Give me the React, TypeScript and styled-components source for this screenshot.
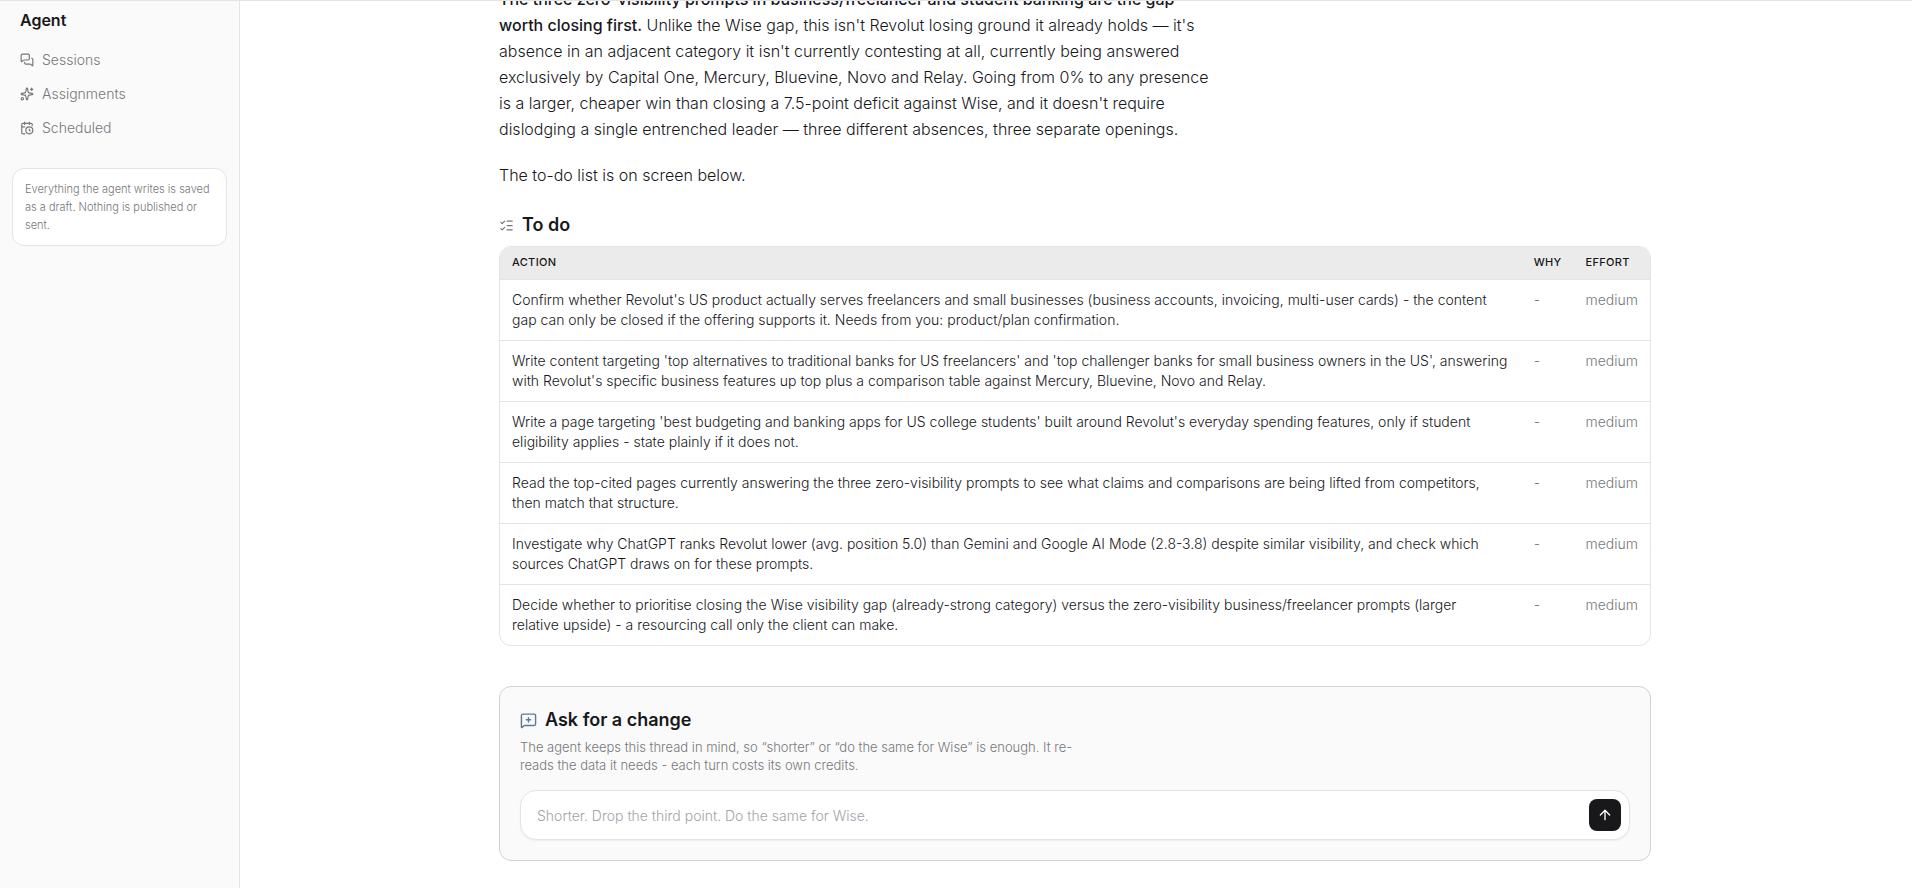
import React from "react";
import styled, { createGlobalStyle } from "styled-components";
import {
  ArrowUp,
  CalendarClock,
  ListChecks,
  MessageSquarePlus,
  MessagesSquare,
  Sparkles,
} from "lucide-react";

const GlobalStyle = createGlobalStyle`
  * { box-sizing: border-box; }
  body {
    margin: 0;
    background: #ffffff;
    color: #18181b;
    font-family: Inter, "Liberation Sans", sans-serif;
    font-weight: 300;
  }
`;

const Shell = styled.div`
  display: flex;
  height: 100vh;
  border-top: 1px solid #e4e4e5;
`;

const Sidebar = styled.aside`
  flex: none;
  width: 240px;
  padding: 7px 12px;
  background: #fafafa;
  border-right: 1px solid #e4e4e5;
`;

const SidebarTitle = styled.h1`
  margin: 0 0 12px;
  padding: 0 8px;
  font-size: 16px;
  line-height: 24px;
  font-weight: 600;
`;

const Nav = styled.nav`
  display: flex;
  flex-direction: column;
  gap: 2px;
`;

const NavLink = styled.a`
  display: flex;
  align-items: center;
  gap: 8px;
  height: 32px;
  padding: 0 8px;
  color: #77777b;
  font-size: 14px;
  line-height: 20px;
  text-decoration: none;
`;

const Note = styled.p`
  margin: 24px 0 0;
  padding: 11px 12px;
  background: #ffffff;
  border: 1px solid #e4e4e5;
  border-radius: 12px;
  color: #77777b;
  font-size: 11px;
  line-height: 18px;
`;

/* Reversed column keeps the thread scrolled to its latest content. */
const Main = styled.main`
  flex: 1;
  min-width: 0;
  padding-right: 2px;
  display: flex;
  flex-direction: column-reverse;
  overflow-y: auto;
  scrollbar-width: none;
`;

const Thread = styled.div`
  width: 100%;
  max-width: 1152px;
  margin: 0 auto;
  padding: 24px 0 27px;
`;

const Prose = styled.div`
  max-width: 720px;
  margin-bottom: 24px;
  font-size: 16px;
  line-height: 26px;

  p {
    margin: 0 0 20px;
  }

  p:last-child {
    margin-bottom: 0;
  }

  strong {
    font-weight: 500;
  }
`;

const SectionTitle = styled.h2<{ $gap: number }>`
  display: flex;
  align-items: center;
  gap: 8px;
  margin: 0 0 ${(p) => p.$gap}px;
  font-size: 18px;
  line-height: 26px;
  font-weight: 600;
`;

const IconBox = styled.span<{ $color: string }>`
  display: inline-flex;
  color: ${(p) => p.$color};
`;

const TableFrame = styled.div`
  overflow: hidden;
  border: 1px solid #e4e4e5;
  border-radius: 12px;
`;

const Table = styled.table`
  width: 100%;
  border-collapse: collapse;
  font-size: 14px;
  line-height: 20px;
`;

const HeadCell = styled.th`
  padding: 7px 12px 9px;
  background: #ebebeb;
  font-size: 11px;
  line-height: 16px;
  font-weight: 500;
  letter-spacing: 0.03em;
  text-align: left;
  text-transform: uppercase;
`;

const Cell = styled.td<{ $muted?: boolean }>`
  padding: 10px 12px;
  border-top: 1px solid #e4e4e5;
  color: ${(p) => (p.$muted ? "#77777b" : "#18181b")};
  vertical-align: top;
`;

const AskCard = styled.section`
  margin-top: 40px;
  padding: 20px;
  background: #fafafa;
  border: 1px solid #d1d1d4;
  border-radius: 12px;
`;

const Hint = styled.p`
  max-width: 560px;
  margin: 0 0 16px;
  color: #77777b;
  font-size: 13px;
  line-height: 18px;
`;

const Composer = styled.form`
  display: flex;
  align-items: center;
  gap: 8px;
  padding: 8px 8px 8px 16px;
  background: #ffffff;
  border: 1px solid #e4e4e5;
  border-radius: 16px;
  box-shadow: 0 1px 2px rgba(0, 0, 0, 0.05);
`;

const Field = styled.input`
  flex: 1;
  min-width: 0;
  height: 32px;
  padding: 0;
  border: 0;
  outline: 0;
  background: transparent;
  color: #18181b;
  font: inherit;
  font-size: 14px;

  &::placeholder {
    color: #a3a3a7;
    opacity: 1;
  }
`;

const SendButton = styled.button`
  display: flex;
  align-items: center;
  justify-content: center;
  width: 32px;
  height: 32px;
  padding: 0;
  border: 0;
  border-radius: 8px;
  background: #18181b;
  color: #ffffff;
`;

const navItems = [
  { label: "Sessions", Icon: MessagesSquare },
  { label: "Assignments", Icon: Sparkles },
  { label: "Scheduled", Icon: CalendarClock },
];

const actions = [
  "Confirm whether Revolut's US product actually serves freelancers and small businesses (business accounts, invoicing, multi-user cards) - the content gap can only be closed if the offering supports it. Needs from you: product/plan confirmation.",
  "Write content targeting 'top alternatives to traditional banks for US freelancers' and 'top challenger banks for small business owners in the US', answering with Revolut's specific business features up top plus a comparison table against Mercury, Bluevine, Novo and Relay.",
  "Write a page targeting 'best budgeting and banking apps for US college students' built around Revolut's everyday spending features, only if student eligibility applies - state plainly if it does not.",
  "Read the top-cited pages currently answering the three zero-visibility prompts to see what claims and comparisons are being lifted from competitors, then match that structure.",
  "Investigate why ChatGPT ranks Revolut lower (avg. position 5.0) than Gemini and Google AI Mode (2.8-3.8) despite similar visibility, and check which sources ChatGPT draws on for these prompts.",
  "Decide whether to prioritise closing the Wise visibility gap (already-strong category) versus the zero-visibility business/freelancer prompts (larger relative\u00a0upside) - a resourcing call only the client can make.",
];

export default function App() {
  return (
    <>
      <GlobalStyle />
      <Shell>
        <Sidebar>
          <SidebarTitle>Agent</SidebarTitle>
          <Nav>
            {navItems.map(({ label, Icon }) => (
              <NavLink key={label} href="#">
                <Icon size={14} strokeWidth={2} />
                {label}
              </NavLink>
            ))}
          </Nav>
          <Note>Everything the agent writes is saved as a draft. Nothing is published or sent.</Note>
        </Sidebar>
        <Main>
          <Thread>
            <Prose>
              <p>
                <strong>
                  The three zero-visibility prompts in business/freelancer and student banking are the
                  gap worth closing first.
                </strong>{" "}
                Unlike the Wise gap, this isn't Revolut losing ground it already holds — it's absence
                in an adjacent category it isn't currently contesting at all, currently being answered
                exclusively by Capital One, Mercury, Bluevine, Novo and Relay. Going from 0% to any
                presence is a larger, cheaper win than closing a 7.5-point deficit against Wise, and it
                doesn't require dislodging a single entrenched leader — three different absences, three
                separate openings.
              </p>
              <p>The to-do list is on screen below.</p>
            </Prose>
            <SectionTitle $gap={8}>
              <IconBox $color="#77777b">
                <ListChecks size={15} strokeWidth={2} />
              </IconBox>
              To do
            </SectionTitle>
            <TableFrame>
              <Table>
                <thead>
                  <tr>
                    <HeadCell>Action</HeadCell>
                    <HeadCell>Why</HeadCell>
                    <HeadCell>Effort</HeadCell>
                  </tr>
                </thead>
                <tbody>
                  {actions.map((action) => (
                    <tr key={action}>
                      <Cell>{action}</Cell>
                      <Cell $muted>-</Cell>
                      <Cell $muted>medium</Cell>
                    </tr>
                  ))}
                </tbody>
              </Table>
            </TableFrame>
            <AskCard>
              <SectionTitle $gap={5}>
                <IconBox $color="#5a7a9c">
                  <MessageSquarePlus size={17} strokeWidth={2} />
                </IconBox>
                Ask for a change
              </SectionTitle>
              <Hint>
                The agent keeps this thread in mind, so “shorter” or “do the same for Wise” is enough.
                It re-reads the data it needs - each turn costs its own credits.
              </Hint>
              <Composer onSubmit={(e) => e.preventDefault()}>
                <Field
                  aria-label="Ask for a change"
                  placeholder="Shorter. Drop the third point. Do the same for Wise."
                />
                <SendButton type="submit" aria-label="Send">
                  <ArrowUp size={16} strokeWidth={2} />
                </SendButton>
              </Composer>
            </AskCard>
          </Thread>
        </Main>
      </Shell>
    </>
  );
}
